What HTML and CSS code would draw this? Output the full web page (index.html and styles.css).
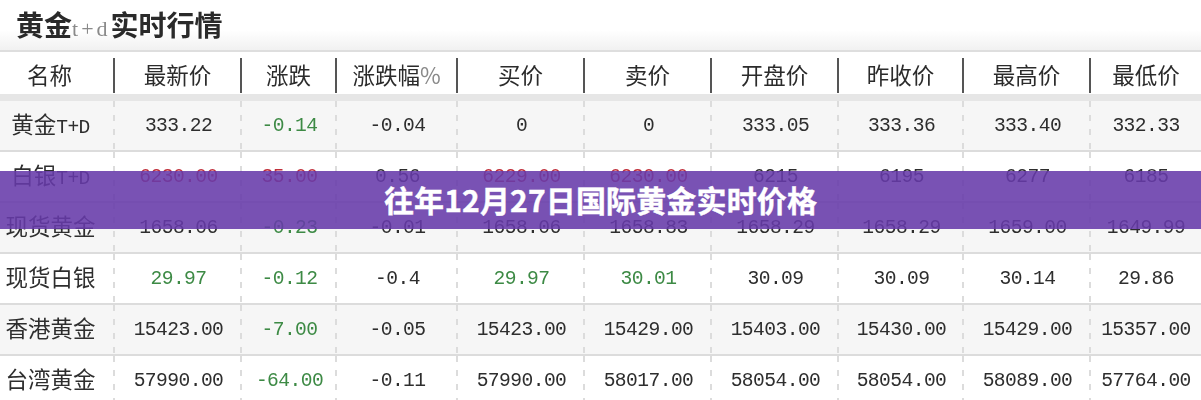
FILE: index.html
```html
<!DOCTYPE html>
<html lang="zh-CN">
<head>
<meta charset="utf-8">
<title>往年12月27日国际黄金实时价格</title>
<link rel="stylesheet" href="styles.css">
</head>
<body>
<main class="hero">
  <div class="picture">
    <h2 class="title">黄金<span class="title-latin">t+d</span>实时行情</h2>
    <table class="quotes">
      <colgroup>
        <col class="c-name"><col class="c-a"><col class="c-b"><col class="c-c"><col class="c-a"><col class="c-a"><col class="c-a"><col class="c-d"><col class="c-a"><col class="c-e">
      </colgroup>
      <thead>
        <tr>
          <th><div>名称</div></th><th><div>最新价</div></th><th><div>涨跌</div></th><th><div>涨跌幅<span class="pct">%</span></div></th><th><div>买价</div></th><th><div>卖价</div></th><th><div>开盘价</div></th><th><div>昨收价</div></th><th><div>最高价</div></th><th><div>最低价</div></th>
        </tr>
      </thead>
      <tbody>
        <tr><td class="name">黄金<span>T+D</span></td><td>333.22</td><td class="down">-0.14</td><td>-0.04</td><td>0</td><td>0</td><td>333.05</td><td>333.36</td><td>333.40</td><td>332.33</td></tr>
        <tr><td class="name">白银<span>T+D</span></td><td class="up">6230.00</td><td class="up">35.00</td><td>0.56</td><td class="up">6229.00</td><td class="up">6230.00</td><td>6215</td><td>6195</td><td>6277</td><td>6185</td></tr>
        <tr><td class="name">现货黄金</td><td>1658.06</td><td class="down">-0.23</td><td>-0.01</td><td>1658.06</td><td>1658.83</td><td>1658.29</td><td>1658.29</td><td>1659.00</td><td>1649.99</td></tr>
        <tr><td class="name">现货白银</td><td class="down">29.97</td><td class="down">-0.12</td><td>-0.4</td><td class="down">29.97</td><td class="down">30.01</td><td>30.09</td><td>30.09</td><td>30.14</td><td>29.86</td></tr>
        <tr><td class="name">香港黄金</td><td>15423.00</td><td class="down">-7.00</td><td>-0.05</td><td>15423.00</td><td>15429.00</td><td>15403.00</td><td>15430.00</td><td>15429.00</td><td>15357.00</td></tr>
        <tr><td class="name">台湾黄金</td><td>57990.00</td><td class="down">-64.00</td><td>-0.11</td><td>57990.00</td><td>58017.00</td><td>58054.00</td><td>58054.00</td><td>58089.00</td><td>57764.00</td></tr>
      </tbody>
    </table>
  </div>
  <div class="banner"><h1>往年12月27日国际黄金实时价格</h1></div>
</main>
</body>
</html>
```
FILE: styles.css
```css
* { box-sizing: border-box; }
html, body { margin: 0; padding: 0; background: #fff; }
.hero { position: relative; width: 1201px; height: 400px; overflow: hidden; }
.picture { height: 400px; filter: blur(0.45px); color: #2b2b2b; font-family: "Noto Sans CJK SC", sans-serif; }
.title {
  margin: 0; height: 50px; padding: 5px 0 0 16px;
  font-size: 28px; line-height: 38px; font-weight: 700; color: #2a2a2a; white-space: nowrap;
  background: linear-gradient(#fff 0, #fff 30px, #f1f1f1 50px);
}
.title-latin { font-family: "Liberation Serif", serif; font-size: 22px; font-weight: 400; letter-spacing: 3px; color: #8a8a8a; }
.quotes { width: 1201px; border-collapse: separate; border-spacing: 0; table-layout: fixed; border-top: 2px solid #dedede; }
.c-name { width: 115px; }
.c-a { width: 127px; }
.c-b { width: 95px; }
.c-c { width: 121px; }
.c-d { width: 125px; }
.c-e { width: 110px; }
th { height: 49px; padding: 6px 0 0; font-weight: 400; font-size: 22.5px; background: #fff; border-bottom: 7px solid #e6e6e6; vertical-align: top; }
th div { height: 35px; line-height: 33px; border-right: 2px solid #555; }
th:first-child div { padding-right: 14px; }
th:last-child div { border-right: 0; }
.pct { color: #8a8a8a; }
td {
  height: 51px; padding: 0; text-align: center; vertical-align: middle;
  font-family: "Liberation Mono", monospace; font-size: 19.6px; letter-spacing: -0.55px; color: #2e2e2e;
  border-bottom: 2px solid #dcdcdc;
  background: repeating-linear-gradient(#dcdcdc 0 6px, transparent 6px 14px) right top / 2px 100% no-repeat;
}
td:last-child { background: none; }
tbody tr:nth-child(odd) { background: #f6f6f6; }
tbody tr:nth-child(even) { background: #fff; }
td.name { padding: 0 14px 5px 0; font-family: "Noto Sans CJK SC", sans-serif; font-size: 22.5px; letter-spacing: 0; white-space: nowrap; }
.name span { font-family: "Liberation Mono", monospace; font-size: 19.6px; letter-spacing: -0.55px; }
.down { color: #3d8a45; }
.up { color: #c0303c; }
.banner {
  position: absolute; left: 0; right: 0; top: 171px; height: 58px;
  display: flex; align-items: center; justify-content: center;
  background: rgba(103, 58, 170, 0.88);
}
.banner h1 { margin: 0 0 2px; color: #fff; font-family: "Noto Sans CJK SC", sans-serif; font-size: 30px; line-height: 54px; font-weight: 700; letter-spacing: 0.15px; -webkit-text-stroke: 0.4px #fff; white-space: nowrap; }
```
